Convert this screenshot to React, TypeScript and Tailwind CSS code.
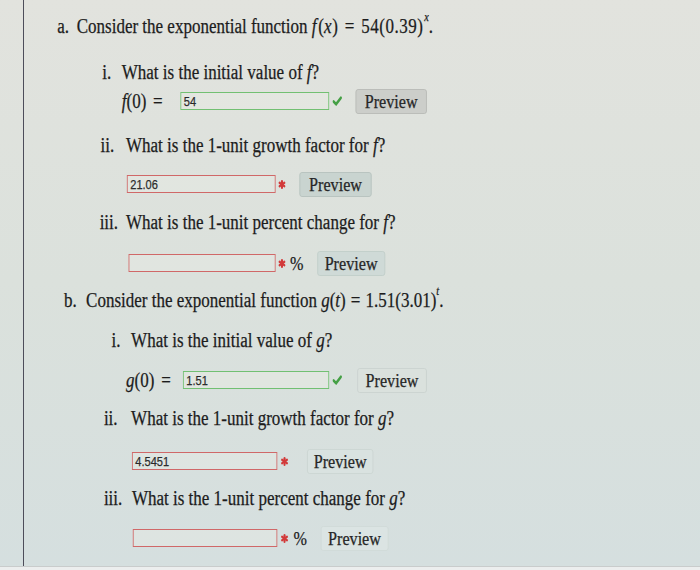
import React from "react";

const Check = () => (
  <svg width="11" height="10" viewBox="0 0 11 10" className="shrink-0">
    <path d="M1.2 5.4 L4.2 8.2 L9.8 1.8" fill="none" stroke="#45a045" strokeWidth="2.8" strokeLinecap="round" strokeLinejoin="round" />
  </svg>
);

const Cross = () => (
  <svg width="9" height="9" viewBox="0 0 9 9" className="shrink-0">
    <g stroke="#d23a3a" strokeWidth="2.4" strokeLinecap="round">
      <line x1="4.5" y1="1.2" x2="4.5" y2="7.8" />
      <line x1="1.6" y1="2.8" x2="7.4" y2="6.2" />
      <line x1="1.6" y1="6.2" x2="7.4" y2="2.8" />
    </g>
  </svg>
);

const Box = ({ ok, value, w }: { ok: boolean; value?: string; w: string }) => (
  <div
    className={`${w} h-[18px] shrink-0 border flex items-center pl-[3px] font-['Liberation_Sans',sans-serif] text-[13px] text-[#333] ${
      ok ? "border-[#72c072] bg-[#e6e9e2]/60" : "border-[#d06868] bg-[#e6e9e4]/50"
    }`}
  >
    {value}
  </div>
);

const Preview = ({ cls }: { cls: string }) => (
  <div className={`h-[25px] flex items-center justify-center rounded-[3px] border text-[19px] text-[#2a2a2a] ${cls}`}>
    Preview
  </div>
);

export default function App() {
  return (
    <div className="w-[700px] h-[570px] overflow-hidden flex flex-col bg-[#e9eae8]">
      <div className="h-[566px] flex bg-gradient-to-b from-[#e2e3de] via-[#dbe1dc] to-[#d5dfdf]">
        <div className="w-[24px] shrink-0 border-r border-[#4d4d5a]" />
        <div className="flex-1 min-w-0">
          <div className="origin-top-left scale-x-[0.85] w-[800px] pt-[14px] flex flex-col font-['Liberation_Serif',serif] text-[20px] text-[#1c1c1c] leading-none [-webkit-text-stroke:0.25px_#1c1c1c]">
            {/* a */}
            <div className="h-[24px] flex items-center pl-[39px]">
              <span className="w-[23px]">a.</span>
              <span>Consider the exponential function&nbsp;</span>
              <i>f</i>
              <span className="ml-[2px]">(</span>
              <i>x</i>
              <span className="ml-[1px]">)</span>
              <span className="mx-[8px]">=</span>
              <span className="tracking-[0.6px]">54(0.39)</span>
              <sup className="text-[12px] italic -translate-y-[3px] ml-[1px]">x</sup>
              <span>.</span>
            </div>
            {/* a.i */}
            <div className="h-[24px] mt-[22px] flex items-center pl-[92px]">
              <span className="w-[23px]">i.</span>
              <span>
                What is the initial value of <i>f</i>?
              </span>
            </div>
            <div className="h-[24px] mt-[5px] flex items-center pl-[115px]">
              <span className="w-[69px] shrink-0">
                <i>f</i>(0)<span className="ml-[8px]">=</span>
              </span>
              <Box ok value="54" w="w-[175px]" />
              <span className="ml-[4px]"><Check /></span>
              <span className="ml-[16px]">
                <Preview cls="w-[84px] bg-[#ccceca] border-[#b9bbb6]" />
              </span>
            </div>
            {/* a.ii */}
            <div className="h-[24px] mt-[20px] flex items-center pl-[90px]">
              <span className="w-[30px]">ii.</span>
              <span>
                What is the 1-unit growth factor for <i>f</i>?
              </span>
            </div>
            <div className="h-[24px] mt-[15px] flex items-center pl-[121px]">
              <Box ok={false} value="21.06" w="w-[175px]" />
              <span className="ml-[3px]"><Cross /></span>
              <span className="ml-[16px]">
                <Preview cls="w-[85px] bg-[#c9d4d0] border-[#b6c2be]" />
              </span>
            </div>
            {/* a.iii */}
            <div className="h-[24px] mt-[14px] flex items-center pl-[89px]">
              <span className="w-[31px]">iii.</span>
              <span>
                What is the 1-unit percent change for <i>f</i>?
              </span>
            </div>
            <div className="h-[24px] mt-[17px] flex items-center pl-[123px]">
              <Box ok={false} w="w-[173px]" />
              <span className="ml-[3px]"><Cross /></span>
              <span className="ml-[5px] text-[19px]">%</span>
              <span className="ml-[16px]">
                <Preview cls="w-[80px] bg-[#cfdad7] border-[#c1ceca]" />
              </span>
            </div>
            {/* b */}
            <div className="h-[24px] mt-[13px] flex items-center pl-[47px]">
              <span className="w-[26px]">b.</span>
              <span>Consider the exponential function&nbsp;</span>
              <i>g</i>
              <span>(</span>
              <i>t</i>
              <span>)</span>
              <span className="mx-[6px]">=</span>
              <span>1.51(3.01)</span>
              <sup className="text-[12px] italic -translate-y-[3px]">t</sup>
              <span>.</span>
            </div>
            {/* b.i */}
            <div className="h-[24px] mt-[16px] flex items-center pl-[103px]">
              <span className="w-[23px]">i.</span>
              <span>
                What is the initial value of <i>g</i>?
              </span>
            </div>
            <div className="h-[24px] mt-[16px] flex items-center pl-[120px]">
              <span className="w-[67px] shrink-0">
                <i>g</i>(0)<span className="ml-[8px]">=</span>
              </span>
              <Box ok value="1.51" w="w-[172px]" />
              <span className="ml-[4px]"><Check /></span>
              <span className="ml-[18px]">
                <Preview cls="w-[82px] bg-[#dae1dd] border-[#cbd3cf]" />
              </span>
            </div>
            {/* b.ii */}
            <div className="h-[24px] mt-[14px] flex items-center pl-[94px]">
              <span className="w-[32px]">ii.</span>
              <span>
                What is the 1-unit growth factor for <i>g</i>?
              </span>
            </div>
            <div className="h-[24px] mt-[19px] flex items-center pl-[127px]">
              <Box ok={false} value="4.5451" w="w-[171px]" />
              <span className="ml-[4px]"><Cross /></span>
              <span className="ml-[22px]">
                <Preview cls="w-[78px] bg-[#d9e2e0] border-[#ccd6d3]" />
              </span>
            </div>
            {/* b.iii */}
            <div className="h-[24px] mt-[13px] flex items-center pl-[94px]">
              <span className="w-[33px]">iii.</span>
              <span>
                What is the 1-unit percent change for <i>g</i>?
              </span>
            </div>
            <div className="h-[24px] mt-[16px] flex items-center pl-[128px]">
              <Box ok={false} w="w-[170px]" />
              <span className="ml-[4px]"><Cross /></span>
              <span className="ml-[6px] text-[19px]">%</span>
              <span className="ml-[16px]">
                <Preview cls="w-[80px] bg-[#dbe4e3] border-[#d0dad8]" />
              </span>
            </div>
          </div>
        </div>
      </div>
      <div className="h-[4px] border-t border-[#c9cccc] bg-[#eceeee]" />
    </div>
  );
}
